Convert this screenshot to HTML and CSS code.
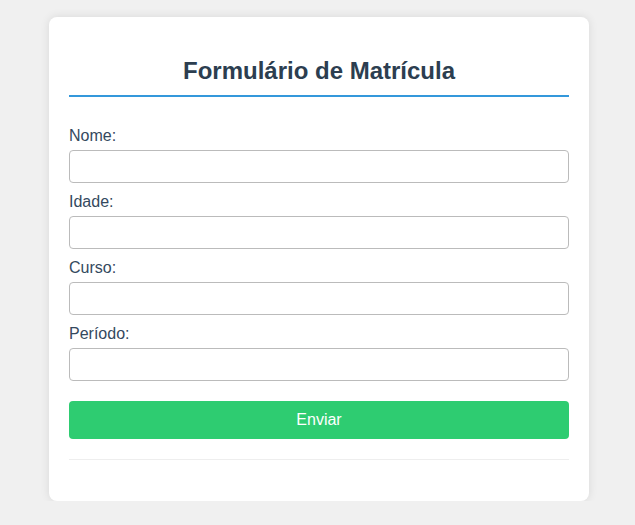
FILE: index.html
```html
<!DOCTYPE html>
<html lang="pt">
<head>
<meta charset="utf-8">
<title>Formulário de Matrícula</title>
<link rel="stylesheet" href="styles.css">
</head>
<body>
<div class="card">
  <h2 class="title">Formulário de Matrícula</h2>
  <form class="form">
    <label class="label" for="nome">Nome:</label>
    <input class="input" id="nome" type="text">
    <label class="label" for="idade">Idade:</label>
    <input class="input" id="idade" type="text">
    <label class="label" for="curso">Curso:</label>
    <input class="input" id="curso" type="text">
    <label class="label" for="periodo">Período:</label>
    <input class="input" id="periodo" type="text">
    <button class="btn" type="button">Enviar</button>
  </form>
  <hr class="sep">
</div>
</body>
</html>
```
FILE: styles.css
```css
html, body {
  margin: 0;
  padding: 0;
}
body {
  background: #f0f0f0;
  font-family: "Liberation Sans", Arial, sans-serif;
  padding: 17px 0 0 3px;
}
.card {
  width: 500px;
  margin: 0 auto;
  background: #fff;
  border-radius: 8px;
  padding: 20px;
  box-shadow: 0 0 10px rgba(0,0,0,0.1);
}
.title {
  margin: 20px 0 30px;
  padding-bottom: 10px;
  border-bottom: 2px solid #3498db;
  text-align: center;
  color: #2c3e50;
  font-size: 24px;
  font-weight: bold;
}
.form {
  display: block;
}
.label {
  display: block;
  color: #34495e;
  font-size: 16px;
  margin-bottom: 5px;
}
.input {
  display: block;
  box-sizing: border-box;
  width: 100%;
  padding: 8px;
  margin: 0 0 10px;
  border: 1px solid #bbb;
  border-radius: 4px;
  font-family: "Liberation Sans", Arial, sans-serif;
  font-size: 13.33px;
  height: 33px;
}
.btn {
  display: block;
  width: 100%;
  margin-top: 20px;
  padding: 10px;
  background: #2ecc71;
  color: #fff;
  border: none;
  border-radius: 4px;
  font-family: "Liberation Sans", Arial, sans-serif;
  font-size: 16px;
  line-height: 18px;
}
.sep {
  border: none;
  border-top: 1px solid #eee;
  margin: 20px 0 21px;
}
```
